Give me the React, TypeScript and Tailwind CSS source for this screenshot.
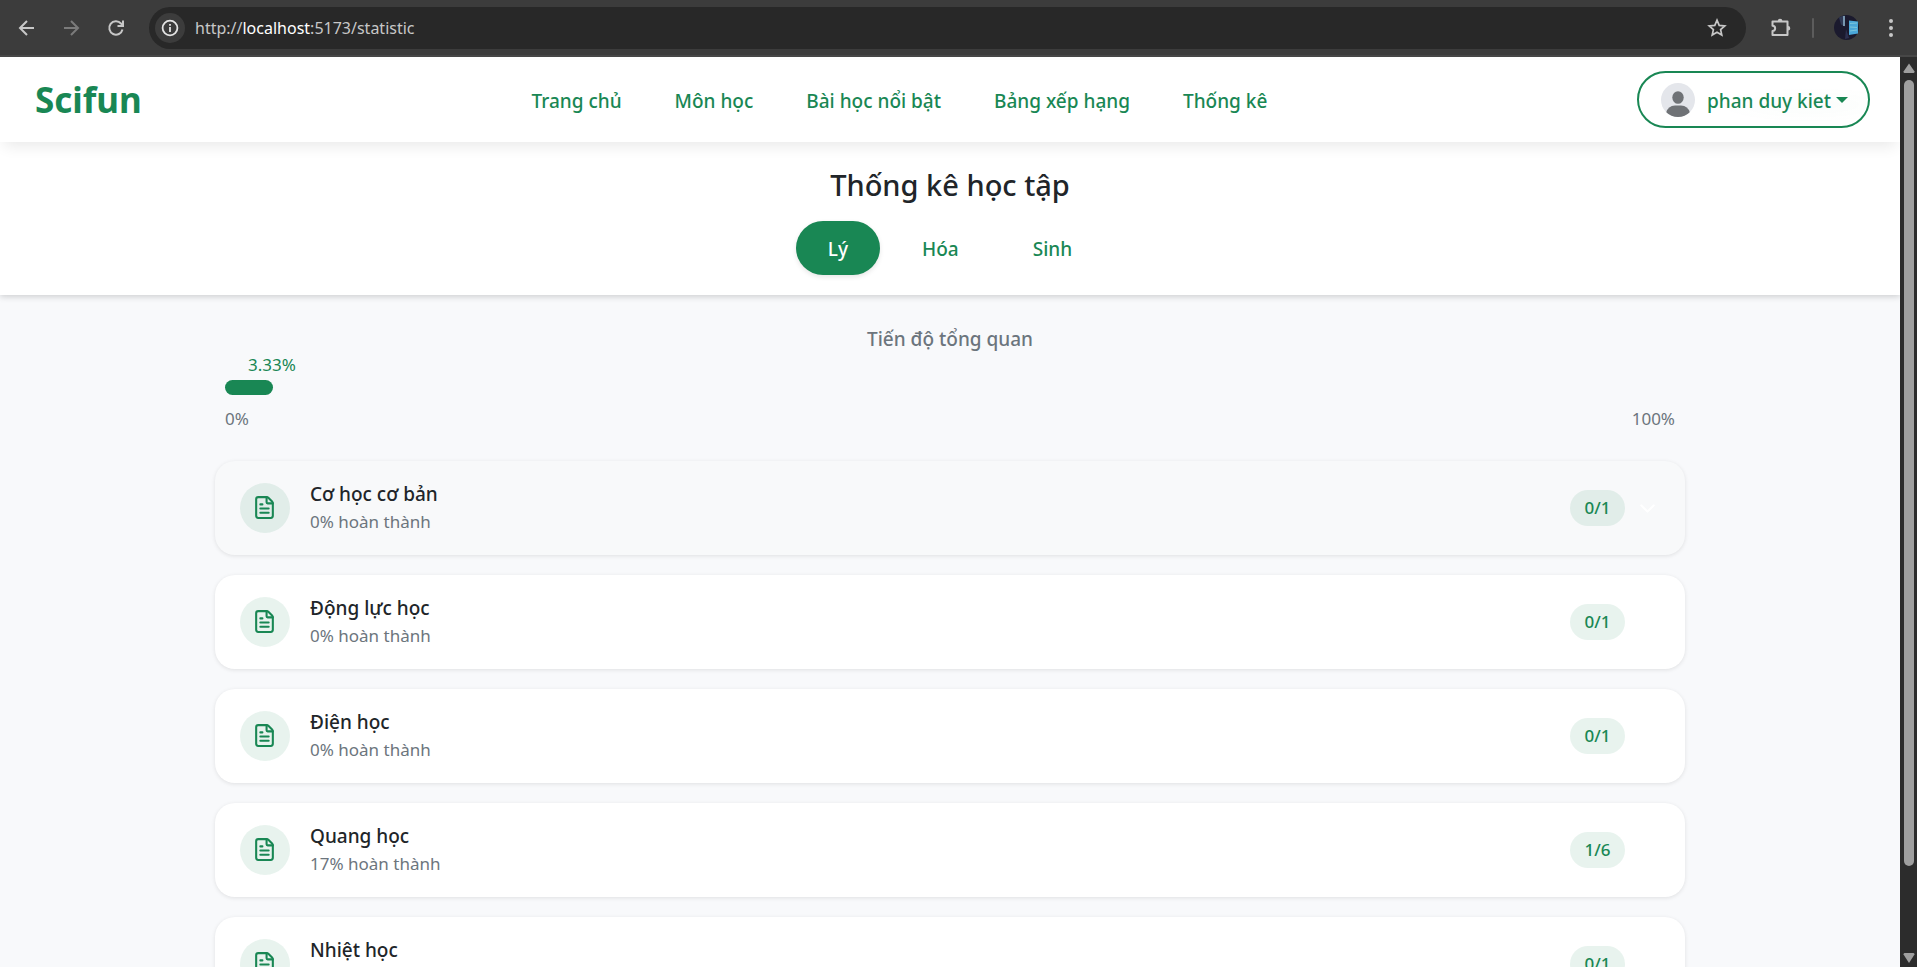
import { ChevronDown, FileText } from "lucide-react";

const navItems = ["Trang chủ", "Môn học", "Bài học nổi bật", "Bảng xếp hạng", "Thống kê"];
const subjects = ["Lý", "Hóa", "Sinh"];
const topics = [
  { name: "Cơ học cơ bản", percent: 0, score: "0/1", hovered: true },
  { name: "Động lực học", percent: 0, score: "0/1", hovered: false },
  { name: "Điện học", percent: 0, score: "0/1", hovered: false },
  { name: "Quang học", percent: 17, score: "1/6", hovered: false },
  { name: "Nhiệt học", percent: 0, score: "0/1", hovered: false },
];
const overall = 3.33;

function BrowserBar() {
  return (
    <div className="flex h-[57px] shrink-0 items-center border-b-2 border-[#474747] bg-[#3c3c3c] pl-4 text-[#c7c7c7]">
      <button aria-label="Back" className="flex w-[22px] justify-center">
        <svg width="22" height="22" viewBox="0 0 22 22" fill="none" stroke="currentColor" strokeWidth="2">
          <path d="M18 11H4.500M11 4l-7 7 7 7" />
        </svg>
      </button>
      <button aria-label="Forward" className="ml-[22px] flex w-[22px] justify-center text-[#7b7b7b]">
        <svg width="22" height="22" viewBox="0 0 22 22" fill="none" stroke="currentColor" strokeWidth="2">
          <path d="M4 11h13.500M11 4l7 7-7 7" />
        </svg>
      </button>
      <button aria-label="Reload" className="ml-[23px] flex w-[22px] justify-center">
        <svg width="22" height="22" viewBox="0 0 22 22" fill="none" stroke="currentColor" strokeWidth="2">
          <path d="M17.500 12.500A6.700 6.700 0 1 1 16 6.500L18 8.500" />
          <path d="M18 3.500v5.500h-5.500" />
        </svg>
      </button>
      <div className="ml-[22px] flex h-[42px] flex-1 items-center rounded-full bg-[#282828] pr-[18px] pl-[6px]">
        <span className="flex size-[30px] items-center justify-center rounded-full bg-[#3c3c3c]">
          <svg width="18" height="18" viewBox="0 0 18 18" fill="none" stroke="#e3e3e3" strokeWidth="1.800">
            <circle cx="9" cy="9" r="7.400" />
            <path d="M9 8v5M9 5v1.800" />
          </svg>
        </span>
        <span className="ml-[10px] flex-1 text-[16px] text-[#c7c7c7]">
          http://<span className="text-white">localhost</span>:5173/statistic
        </span>
        <button aria-label="Bookmark">
          <svg width="22" height="22" viewBox="0 0 22 22" fill="none" stroke="currentColor" strokeWidth="1.700">
            <path d="M11 3.200l2.200 5.200 5.600.5-4.200 3.700 1.200 5.500L11 15.200l-4.800 2.900 1.200-5.500-4.200-3.700 5.600-.5z" />
          </svg>
        </button>
      </div>
      <button aria-label="Extensions" className="ml-6">
        <svg width="22" height="22" viewBox="0 0 22 22" fill="none" stroke="currentColor" strokeWidth="2">
          <path d="M2.500 4.500h15v13.500h-15v-4a2.600 2.600 0 0 0 0-5.300z" strokeLinejoin="round" />
          <path d="M7.800 4a2.300 2.300 0 0 1 4.600 0zM18 9a2.300 2.300 0 0 1 0 4.600z" fill="currentColor" stroke="none" />
        </svg>
      </button>
      <span className="ml-5 h-5 w-0.5 rounded bg-[#5c5c5c]" />
      <svg className="ml-5" width="25" height="25" viewBox="0 0 25 25" role="img" aria-label="Profile">
        <circle cx="12.500" cy="12.500" r="12.500" fill="#1b1a2e" />
        <path d="M5 2.500Q8 .5 11 .5v11l-4-2z" fill="#2f3854" />
        <path d="M9 1h2v10h-2z" fill="#7896ae" />
        <path d="M12 14l3 9-4 1z" fill="#2d3050" />
        <path d="M15 5.500l9 1v12l-9 1.500z" fill="#4aa7d8" />
        <path d="M16 8.500l7-.5M16 12l7 .5M16 16l7-1" stroke="#7cc6dc" strokeWidth="1.200" />
      </svg>
      <button aria-label="Menu" className="mr-[15px] ml-[21px]">
        <svg width="22" height="22" viewBox="0 0 22 22" fill="currentColor">
          <circle cx="11" cy="4" r="2" />
          <circle cx="11" cy="11" r="2" />
          <circle cx="11" cy="18" r="2" />
        </svg>
      </button>
    </div>
  );
}

function Header() {
  return (
    <header className="relative z-20 flex h-[85px] shrink-0 items-center bg-white pr-[30px] pl-[35px] shadow-[0_8px_14px_-4px_rgba(0,0,0,0.09)]">
      <a href="#home" className="mr-5 pt-[2px] text-[35px] font-bold text-[#198754]">
        Scifun
      </a>
      <nav className="flex flex-1 justify-center gap-[53px] pt-[3px]">
        {navItems.map((item) => (
          <a key={item} href="#nav" className="text-[19px] font-medium whitespace-nowrap text-[#198754]">
            {item}
          </a>
        ))}
      </nav>
      <button className="flex h-[57px] items-center rounded-full border-2 border-[#198754] bg-[radial-gradient(ellipse_at_75%_60%,rgba(25,135,84,0.02),transparent_40%)] pr-5 pl-[22px] text-[19px] font-medium text-[#198754]">
        <svg width="34" height="34" viewBox="0 0 34 34" aria-hidden="true">
          <clipPath id="avatar">
            <circle cx="17" cy="17" r="17" />
          </clipPath>
          <g clipPath="url(#avatar)">
            <rect width="34" height="34" fill="#e4e6eb" />
            <ellipse cx="17" cy="14.500" rx="5.700" ry="6.300" fill="#6f7276" />
            <path d="M5 34v-4q2-7.500 9-7.500h6q7 0 9 7.500v4z" fill="#6f7276" />
          </g>
        </svg>
        <span className="ml-3 pt-[3px]">phan duy kiet</span>
        <svg className="ml-[5px]" width="12" height="6" viewBox="0 0 12 6" aria-hidden="true">
          <path d="M0 0h12L6 6z" fill="#198754" />
        </svg>
      </button>
    </header>
  );
}

function Scrollbar() {
  return (
    <div aria-hidden="true" className="flex w-[17px] shrink-0 flex-col items-center bg-[#2c2c2c] pt-[6px] pb-1">
      <svg width="12" height="10" viewBox="0 0 12 10" fill="#9f9f9f">
        <path d="M6 0.500L11.500 8.500Q11.500 10 10.500 10h-9Q.5 10 .5 8.500z" />
      </svg>
      <div className="mt-[7px] mb-[87px] w-[10px] flex-1 rounded-full bg-[#9f9f9f]" />
      <svg width="12" height="10" viewBox="0 0 12 10" fill="#9f9f9f">
        <path d="M6 10L11.500 1.500Q11.500 0 10.500 0h-9Q.5 0 .5 1.500z" />
      </svg>
    </div>
  );
}

export default function App() {
  return (
    <div className="flex h-screen flex-col overflow-hidden font-['Noto_Sans','Open_Sans',sans-serif]">
      <BrowserBar />
      <div className="flex min-h-0 flex-1">
        <div className="flex min-w-0 flex-1 flex-col overflow-hidden bg-[#f8f9fb]">
          <Header />
          <section className="relative z-10 flex shrink-0 flex-col items-center bg-white pt-[22px] pb-5 shadow-[0_2px_6px_rgba(0,0,0,0.16)]">
            <h1 className="text-[29px] leading-[42px] font-medium text-[#212529]">Thống kê học tập</h1>
            <div className="mt-[15px] flex gap-[10px]">
              {subjects.map((subject, i) => (
                <button
                  key={subject}
                  className={
                    i === 0
                      ? "h-[54px] rounded-full bg-[#198754] px-8 pt-[2px] text-[19px] font-medium text-white shadow-[0_2px_5px_rgba(0,0,0,0.1)]"
                      : "h-[54px] rounded-full px-8 pt-[2px] text-[19px] font-medium text-[#198754]"
                  }
                >
                  {subject}
                </button>
              ))}
            </div>
          </section>
          <main className="mx-auto flex w-full max-w-[1470px] shrink-0 flex-col pt-[30px]">
            <section className="px-[10px]">
              <h2 className="text-center text-[19px] leading-7 font-medium text-[#6c757d]">Tiến độ tổng quan</h2>
              <div className="pl-[23px] text-[17px] leading-6 text-[#198754]">{overall}%</div>
              <div className="mt-[3px] h-[15px]">
                <div className="h-full rounded-full bg-[#198754]" style={{ width: `${overall}%` }} />
              </div>
              <div className="mt-3 flex justify-between text-[17px] leading-6 text-[#6c757d]">
                <span>0%</span>
                <span>100%</span>
              </div>
            </section>
            <ul className="mt-[30px] flex flex-col gap-5">
              {topics.map((topic) => (
                <li key={topic.name}>
                  <button
                    className={
                      "flex h-[94px] w-full items-center rounded-[20px] px-[25px] text-left shadow-[0_1px_4px_rgba(0,0,0,0.1)] " +
                      (topic.hovered ? "bg-[#f8f9fa]" : "bg-white")
                    }
                  >
                    <span className="flex size-[50px] items-center justify-center rounded-full bg-[#198754]/10 pr-px pb-px text-[#198754]">
                      <FileText size={25} />
                    </span>
                    <span className="ml-5 flex flex-1 flex-col">
                      <span className="text-[19px] leading-[27px] font-medium text-[#212529]">{topic.name}</span>
                      <span className="text-[17px] leading-[27px] text-[#6c757d]">{topic.percent}% hoàn thành</span>
                    </span>
                    <span className="flex h-9 w-[55px] items-center justify-center rounded-full bg-[#198754]/10 text-[17px] font-medium text-[#198754]">
                      {topic.score}
                    </span>
                    <ChevronDown size={25} className="ml-[10px] text-white" />
                  </button>
                </li>
              ))}
            </ul>
          </main>
        </div>
        <Scrollbar />
      </div>
    </div>
  );
}
